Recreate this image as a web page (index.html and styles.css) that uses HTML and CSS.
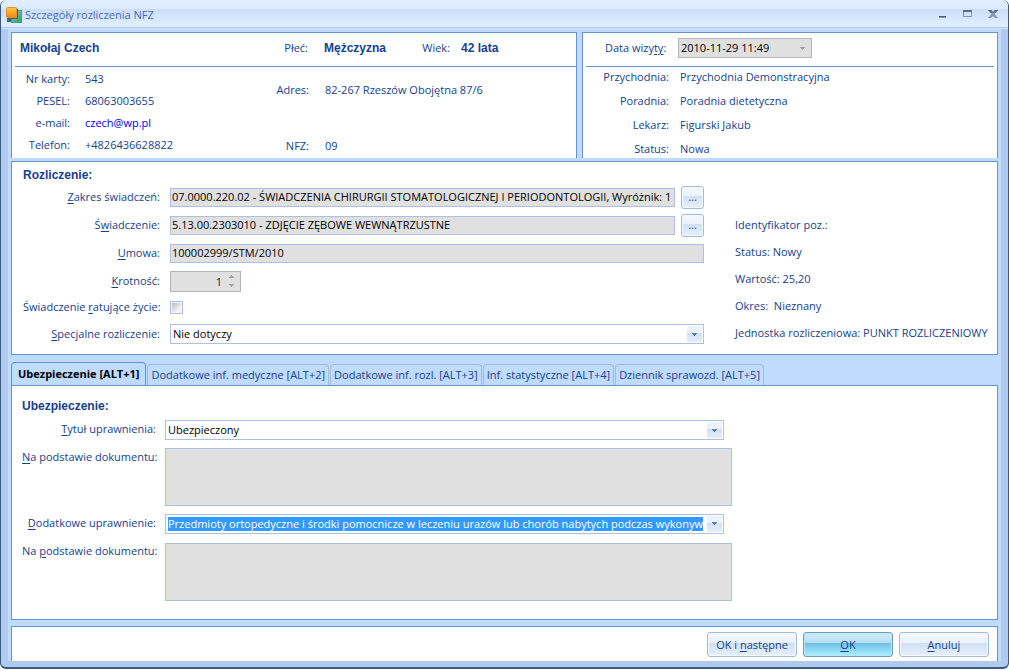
FILE: index.html
```html
<!DOCTYPE html>
<html lang="pl">
<head>
<meta charset="utf-8">
<title>Szczegóły rozliczenia NFZ</title>
<link rel="stylesheet" href="styles.css">
</head>
<body>
<main class="window">
  <header class="titlebar">
    <svg class="app-icon" viewBox="0 0 16 16" aria-hidden="true">
      <defs>
        <linearGradient id="orange" x1="0" y1="0" x2="0" y2="1"><stop offset="0" stop-color="#ffc34a"/><stop offset="1" stop-color="#ee8a0c"/></linearGradient>
        <linearGradient id="green" x1="0" y1="0" x2="1" y2="1"><stop offset="0" stop-color="#8fd0b0"/><stop offset="1" stop-color="#2f9a6c"/></linearGradient>
      </defs>
      <rect x="1" y="11" width="4" height="4" fill="#4a5f9e"/>
      <rect x="5.500" y="3.500" width="10" height="12" fill="url(#green)" stroke="#4f9c80"/>
      <path d="M2 11.500h9.500V2" fill="none" stroke="#4c5a60"/>
      <rect x="0.500" y="0.500" width="10" height="10" rx="1" fill="url(#orange)" stroke="#e0952c"/>
    </svg>
    <h1 class="title">Szczegóły rozliczenia NFZ</h1>
    <div class="window-buttons">
      <button type="button" class="win-btn" aria-label="Minimalizuj"><svg viewBox="0 0 10 10"><path d="M1 6h7v1H1z" fill="#4f5f68"/><path d="M1 7h7v1H1z" fill="#8296b4"/></svg></button>
      <button type="button" class="win-btn" aria-label="Maksymalizuj"><svg viewBox="0 0 10 10"><path d="M0 0h9v2H0z" fill="#5d6e80"/><path d="M.5 2v4.500h8V2" fill="none" stroke="#7d92b3"/></svg></button>
      <button type="button" class="win-btn" aria-label="Zamknij"><svg viewBox="0 0 10 10"><path d="M0 0h3l2 2 2-2h3L6.500 4 10 8H7L5 6 3 8H0l3.500-4z" fill="#8197b5"/><path d="M0 0h3l2 2 2-2h3L8 2.500H2z" fill="#5a6a7c"/></svg></button>
    </div>
  </header>

  <div class="content">
    <div class="top-row">
      <section class="panel patient">
        <div class="panel-head">
          <strong class="name">Mikołaj Czech</strong>
          <span class="sex-label">Płeć:</span><strong class="sex">Mężczyzna</strong>
          <span class="age-label">Wiek:</span><strong>42 lata</strong>
        </div>
        <div class="patient-body">
          <dl class="facts">
            <dt>Nr karty:</dt><dd>543</dd>
            <dt>PESEL:</dt><dd>68063003655</dd>
            <dt>e-mail:</dt><dd><a class="mail" href="mailto:czech@wp.pl">czech@wp.pl</a></dd>
            <dt>Telefon:</dt><dd>+4826436628822</dd>
          </dl>
          <dl class="facts address">
            <dt>Adres:</dt><dd>82-267 Rzeszów Obojętna 87/6</dd>
            <dt>NFZ:</dt><dd>09</dd>
          </dl>
        </div>
      </section>
      <section class="panel visit">
        <div class="panel-head">
          <label class="date-label" for="date">Data wizy<u>ty</u>:</label>
          <select class="select date" id="date" disabled><option>2010-11-29 11:49</option></select>
        </div>
        <dl class="facts visit-facts">
          <dt>Przychodnia:</dt><dd>Przychodnia Demonstracyjna</dd>
          <dt>Poradnia:</dt><dd>Poradnia dietetyczna</dd>
          <dt>Lekarz:</dt><dd>Figurski Jakub</dd>
          <dt>Status:</dt><dd>Nowa</dd>
        </dl>
      </section>
    </div>

    <section class="panel billing">
      <h2 class="section-title">Rozliczenie:</h2>
      <div class="billing-grid">
        <div class="fields">
          <div class="row"><label for="scope"><u>Z</u>akres świadczeń:</label>
            <input class="text" id="scope" readonly value="07.0000.220.02 - ŚWIADCZENIA CHIRURGII STOMATOLOGICZNEJ I PERIODONTOLOGII, Wyróżnik: 1">
            <button type="button" class="btn more">...</button></div>
          <div class="row"><label for="service">Ś<u>w</u>iadczenie:</label>
            <input class="text" id="service" readonly value="5.13.00.2303010 - ZDJĘCIE ZĘBOWE WEWNĄTRZUSTNE">
            <button type="button" class="btn more">...</button></div>
          <div class="row"><label for="contract"><u>U</u>mowa:</label>
            <input class="text" id="contract" readonly value="100002999/STM/2010"></div>
          <div class="row"><label for="multi"><u>K</u>rotność:</label>
            <span class="spinner"><input class="spin-value" id="multi" readonly value="1">
              <svg class="spin-arrows" viewBox="0 0 5 12" aria-hidden="true"><path d="M2 0h1v1h1v1h1v1H0V2h1V1h1zM0 9h5v1H4v1H3v1H2v-1H1v-1H0z" fill="#a5a093"/></svg></span></div>
          <div class="row check-row"><label for="saving">Świadczenie <u>r</u>atujące życie:</label>
            <input type="checkbox" class="check" id="saving"></div>
          <div class="row last-row"><label for="special"><u>S</u>pecjalne rozliczenie:</label>
            <select class="select" id="special"><option>Nie dotyczy</option></select></div>
        </div>
        <div class="summary">
          <p>Identyfikator poz.:</p>
          <p>Status: Nowy</p>
          <p>Wartość: 25,20</p>
          <p>Okres:&nbsp; Nieznany</p>
          <p>Jednostka rozliczeniowa: PUNKT ROZLICZENIOWY</p>
        </div>
      </div>
    </section>

    <div class="tabs" role="tablist">
      <button type="button" class="tab active" role="tab" aria-selected="true">Ubezpieczenie [ALT+1]</button>
      <button type="button" class="tab" role="tab">Dodatkowe inf. medyczne [ALT+2]</button>
      <button type="button" class="tab" role="tab">Dodatkowe inf. rozl. [ALT+3]</button>
      <button type="button" class="tab" role="tab">Inf. statystyczne [ALT+4]</button>
      <button type="button" class="tab" role="tab">Dziennik sprawozd. [ALT+5]</button>
    </div>
    <section class="panel insurance" role="tabpanel">
      <h2 class="section-title">Ubezpieczenie:</h2>
      <div class="insurance-grid">
        <label for="title1"><u>T</u>ytuł uprawnienia:</label>
        <select class="select" id="title1"><option>Ubezpieczony</option></select>
        <label for="doc1"><u>N</u>a podstawie dokumentu:</label>
        <textarea class="area" id="doc1" readonly></textarea>
        <label for="title2"><u>D</u>odatkowe uprawnienie:</label>
        <div class="combo">
          <input class="combo-input" id="title2" value="Przedmioty ortopedyczne i środki pomocnicze w leczeniu urazów lub chorób nabytych podczas wykonywania">
          <button type="button" class="combo-arrow" aria-label="Rozwiń"></button>
        </div>
        <label for="doc2">Na <u>p</u>odstawie dokumentu:</label>
        <textarea class="area" id="doc2" readonly></textarea>
      </div>
    </section>

    <footer class="panel actions">
      <button type="button" class="btn action">OK i <u>n</u>astępne</button>
      <button type="button" class="btn action primary"><u>O</u>K</button>
      <button type="button" class="btn action"><u>A</u>nuluj</button>
    </footer>
  </div>
</main>
</body>
</html>
```
FILE: styles.css
```css
* { box-sizing: border-box; }
html { background: #ffffff; }
body {
  margin: 0;
  color: #15428b;
  font: 11px/16px "Open Sans", "Noto Sans", sans-serif;
}
button, input, select, textarea { font: inherit; color: inherit; margin: 0; border-radius: 0; }
h1, h2, p, dl, dd { margin: 0; }
u { text-underline-offset: 2px; }
strong { font: bold 12px/16px "Liberation Sans", Arial, sans-serif; white-space: nowrap; }

.window {
  display: flex;
  flex-direction: column;
  min-height: calc(100vh - 2px);
  border: 1px solid #3b5a82;
  border-width: 0 1px 2px;
  border-radius: 6px;
  background: #b1cbf0;
  overflow: hidden;
}
.titlebar {
  display: flex;
  align-items: center;
  height: 29px;
  padding: 0 10px 0 5px;
  background: linear-gradient(#e3efff 0, #dae9fc 9px, #cadefa 9px, #e3efff 27px, #a9c9f0 27px, #a9c9f0 28px, #d5e5fa 28px);
}
.app-icon { width: 16px; height: 16px; }
.title { flex: 1; margin-left: 3px; color: #3e6ab8; font-size: 11px; font-weight: normal; }
.window-buttons { display: flex; gap: 15px; }
.win-btn { width: 10px; height: 10px; padding: 0; border: 0; background: none; }
.win-btn svg { display: block; width: 10px; height: 10px; }

.content {
  flex: 1;
  display: flex;
  flex-direction: column;
  margin: 0 7px 6px;
  padding: 3px 3px 0;
  background: #bfdbff;
}
.panel { border: 1px solid #6593cf; background: #ffffff; }

.top-row { display: grid; grid-template-columns: 566fr 416fr; gap: 5px; }
.patient, .visit { border-bottom: 0; padding: 0 0 1px 3px; }
.visit { padding-right: 3px; }
.panel-head {
  display: flex;
  align-items: center;
  height: 34px;
  padding-bottom: 3px;
  border-bottom: 1px solid #6593cf;
}
.name { width: 241px; padding-left: 5px; }
.sex-label { width: 68px; padding-right: 16px; text-align: right; }
.sex { width: 61px; }
.age-label { width: 76px; padding-right: 11px; text-align: right; }
.patient-body { display: grid; grid-template-columns: 206px 1fr; }
.facts { display: grid; }
.facts dt { text-align: right; }
.patient .facts { grid-template-columns: 55px 1fr; column-gap: 15px; grid-auto-rows: 22px; align-items: center; padding-top: 1px; }
.patient .address { grid-template-columns: 88px 1fr; column-gap: 16px; grid-template-rows: 44px 44px; }
.address dt:nth-of-type(2), .address dd:nth-of-type(2) { align-self: end; padding-bottom: 2px; }
.mail { color: #0000ff; text-decoration: none; }
.date-label { width: 92px; padding-left: 19px; }
.visit-facts { grid-template-columns: 83px 1fr; gap: 8px 11px; padding-top: 2px; }

.text, .select, .area, .spinner, .combo { border: 1px solid #abc1de; }
.select {
  appearance: none;
  width: 100%;
  height: 20px;
  padding: 0 20px 0 2px;
  color: #000000;
  background:
    linear-gradient(#5f83b5, #5f83b5) right 6px top 8px / 5px 1px no-repeat,
    linear-gradient(#4a6ea5, #4a6ea5) right 7px top 9px / 3px 1px no-repeat,
    linear-gradient(#4a6ea5, #4a6ea5) right 8px top 10px / 1px 1px no-repeat,
    linear-gradient(#eaf2fc 45%, #cfe0f5 45%, #e3eefb) right 1px center / 15px 16px no-repeat,
    #ffffff;
}
.date {
  width: 134px;
  border-color: #b0b6be;
  opacity: 1;
  background:
    linear-gradient(#a5a093, #a5a093) right 6px top 8px / 5px 1px no-repeat,
    linear-gradient(#a5a093, #a5a093) right 7px top 9px / 3px 1px no-repeat,
    linear-gradient(#a5a093, #a5a093) right 8px top 10px / 1px 1px no-repeat,
    #e0e0e0;
}
.text { flex: 1; min-width: 0; height: 19px; padding: 0 1px 1px; color: #000000; background: #e0e0e0; }

.section-title { font: bold 12px/15px "Liberation Sans", Arial, sans-serif; }
.billing { margin-top: 3px; padding: 6px 11px 5px; }
.billing-grid { display: grid; grid-template-columns: 681px 1fr; column-gap: 31px; }
.row { display: flex; align-items: center; height: 28px; }
.row label { width: 137px; margin-right: 10px; text-align: right; white-space: nowrap; }
.row .select { flex: 1; }
.check-row { height: 24px; }
.last-row { height: 30px; }
.summary { padding-top: 28px; white-space: nowrap; }
.summary p { height: 27px; line-height: 27px; }

.btn {
  padding: 0;
  border: 1px solid #a1bcd8;
  border-radius: 3px;
  color: #15428b;
  background: linear-gradient(#f5f9fe, #e9f1fb 45%, #cfe0f4 45%, #e6f0fc);
  box-shadow: inset 0 0 0 1px #f4f9ff;
}
.more { width: 23px; height: 23px; margin-left: 6px; }
.spinner { display: flex; align-items: center; width: 71px; height: 21px; border-color: #b0b6be; background: #e0e0e0; }
.spin-value { width: 51px; height: 18px; padding: 0; border: 0; color: #15202e; background: none; text-align: right; }
.spin-arrows { width: 5px; height: 12px; margin-left: 7px; }
.check {
  appearance: none;
  width: 13px;
  height: 13px;
  padding: 1px;
  border: 1px solid #abc1de;
  background: linear-gradient(135deg, #b4bac4, #f8f8f8 80%) content-box, #f4f4f4;
}

.tabs { display: flex; align-items: flex-end; height: 30px; gap: 1px; }
.tab {
  height: 21px;
  padding: 0 3px;
  border: 1px solid #9ebcd6;
  border-bottom: 0;
  border-radius: 4px 4px 0 0;
  background: #bfdbff;
  white-space: nowrap;
}
.tab.active { height: 23px; padding: 0 6px; border-color: #6593cf; color: #000000; font-weight: bold; }
.insurance { padding: 13px 10px 18px; }
.insurance-grid {
  display: grid;
  grid-template-columns: 134px 567px;
  gap: 8px 9px;
  grid-template-rows: 20px 58px 20px 59px;
  padding-top: 6px;
}
.insurance-grid label { padding-top: 1px; text-align: right; white-space: nowrap; }
.insurance-grid .select, .combo { width: 559px; }
.area { align-self: end; width: 100%; height: 58px; resize: none; background: #e0e0e0; }
.combo { display: flex; gap: 3px; padding: 1px; background: #ffffff; }
.combo-input { flex: 1; min-width: 0; height: 14px; margin: 1px; padding: 0; border: 0; color: #ffffff; background: #3399ff; }
.combo-arrow {
  width: 15px;
  padding: 0;
  border: 0;
  background:
    linear-gradient(#5f83b5, #5f83b5) 5px 6px / 5px 1px no-repeat,
    linear-gradient(#4a6ea5, #4a6ea5) 6px 7px / 3px 1px no-repeat,
    linear-gradient(#4a6ea5, #4a6ea5) 7px 8px / 1px 1px no-repeat,
    linear-gradient(#eaf2fc 45%, #cfe0f5 45%, #e3eefb);
}

.actions { display: flex; flex: 1; justify-content: flex-end; gap: 6px; margin-top: 6px; padding: 5px 8px 3px; border-bottom: 0; }
.action { width: 90px; height: 25px; }
.primary { border-color: #6f9cc0; background: linear-gradient(#d4ecf8, #b4ddf2 45%, #72bfe6 45%, #a9f2fd); box-shadow: inset 0 0 0 1px #b9e6f6; }
```
